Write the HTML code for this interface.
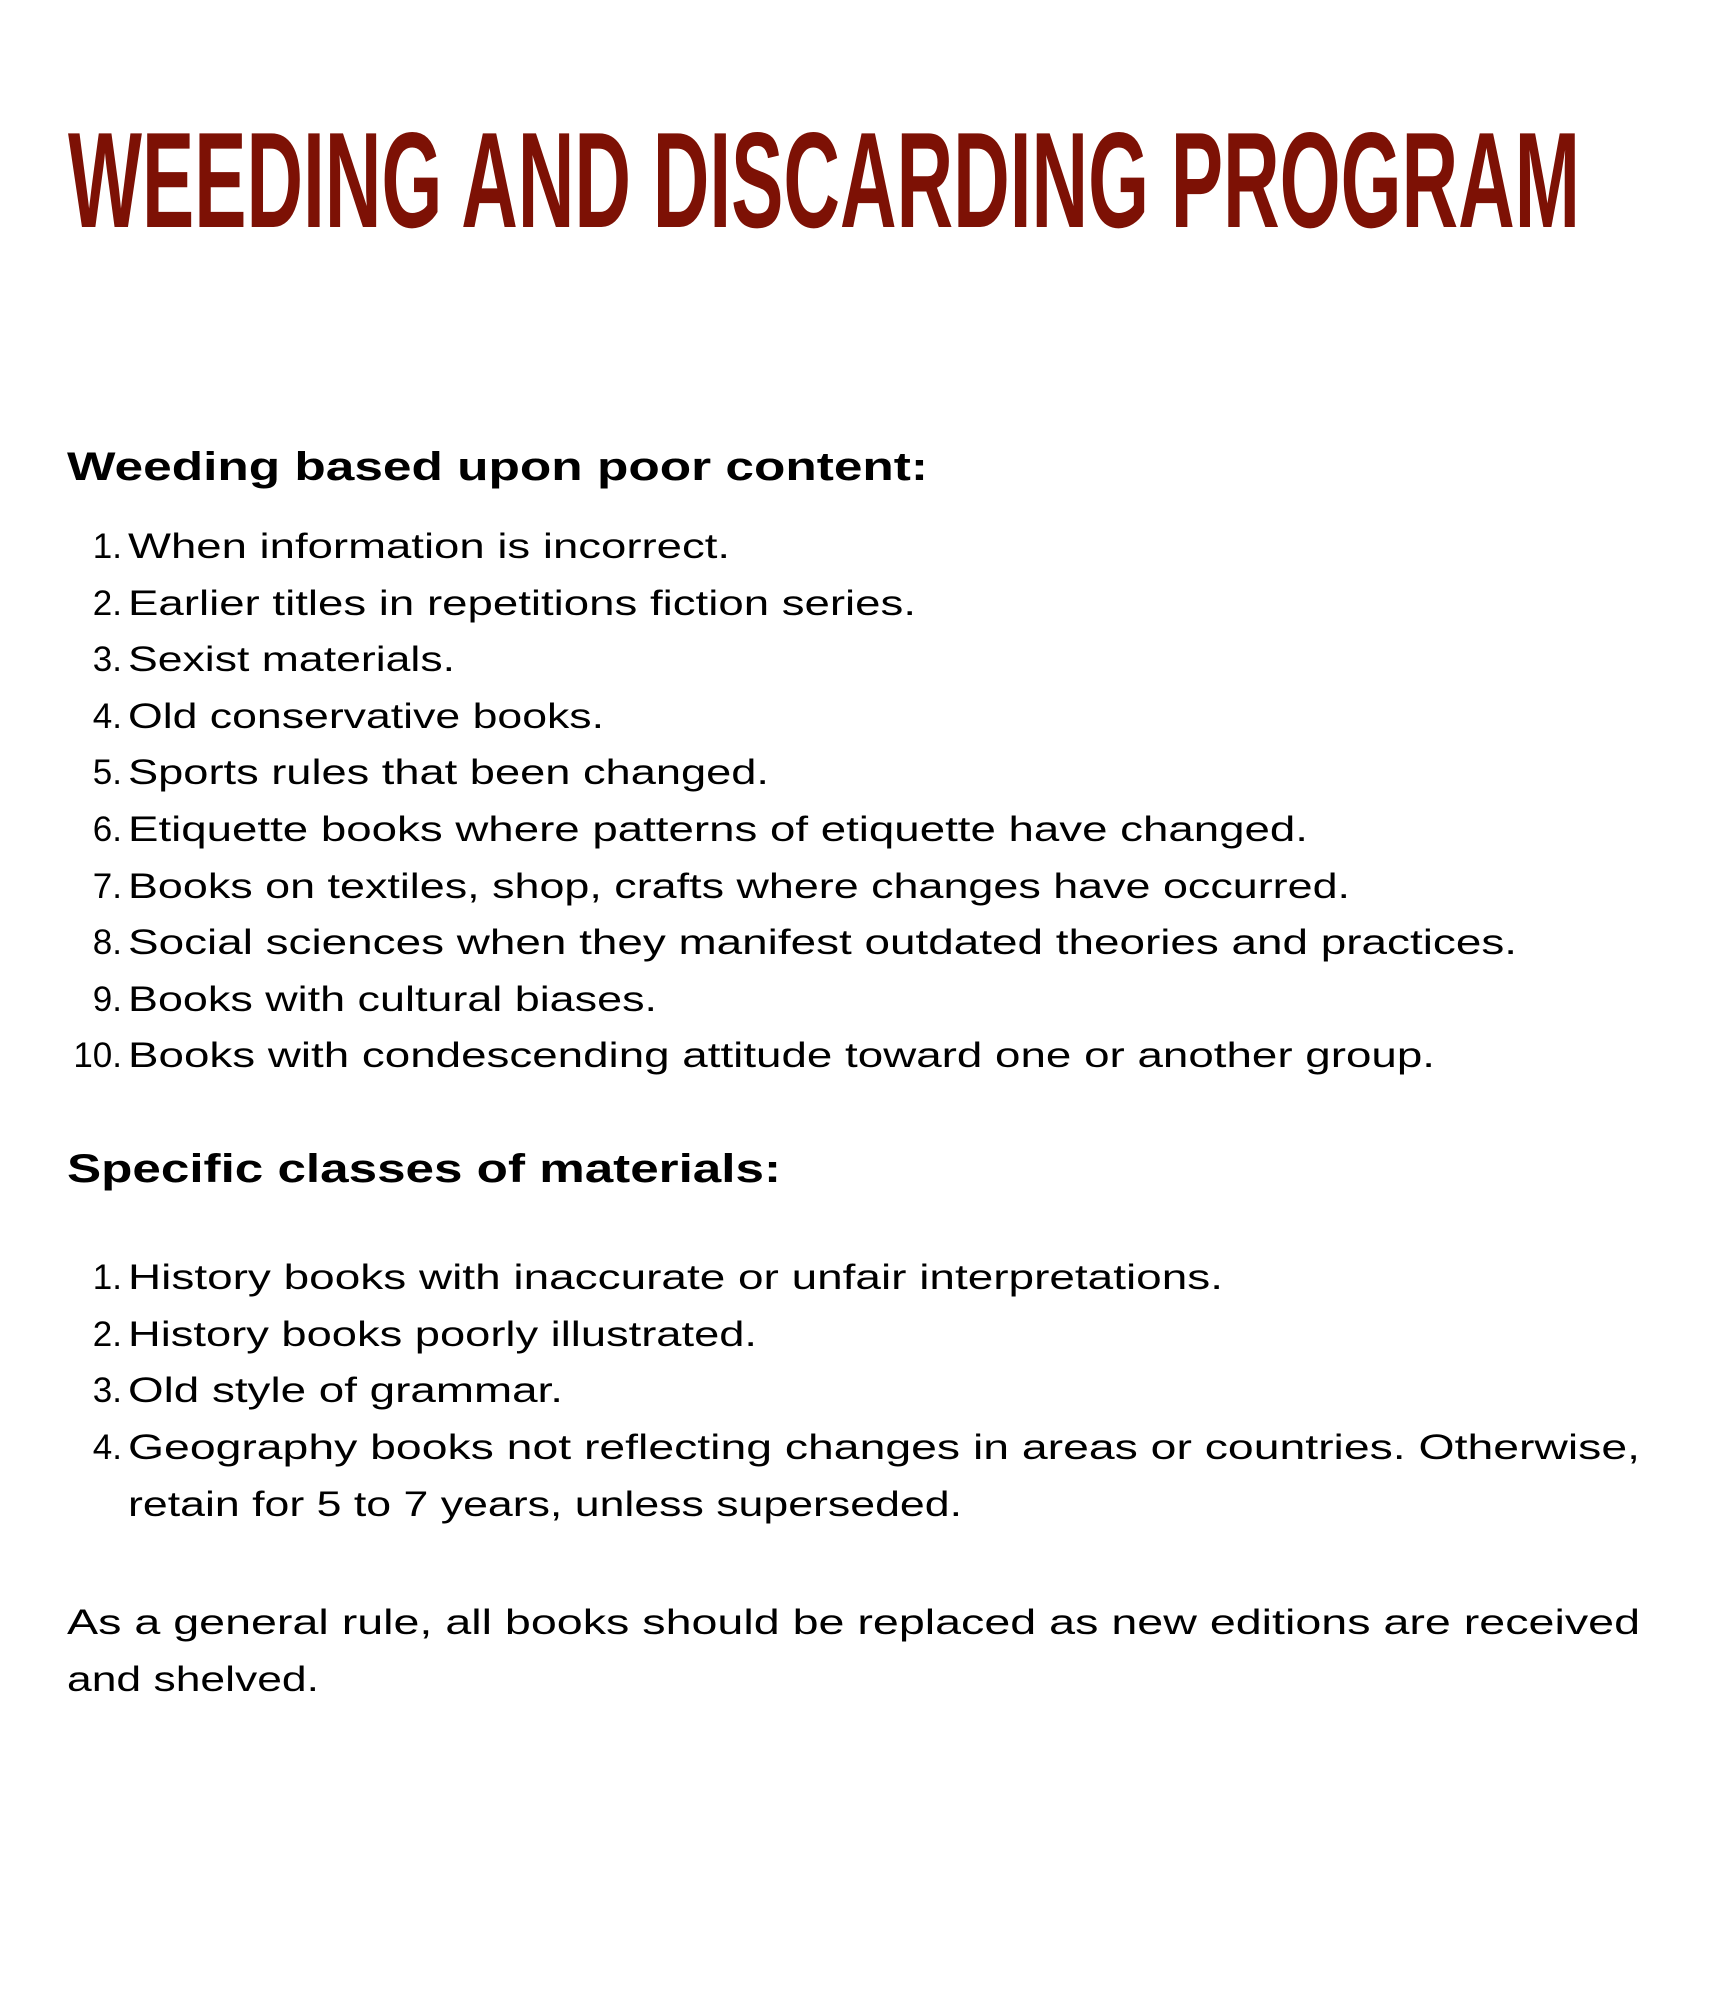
<!DOCTYPE html>
<html><head><meta charset="utf-8"><style>
html,body{margin:0;padding:0;background:#fff;}
svg{display:block;}
.t{font-family:"Liberation Sans Narrow","Liberation Sans",sans-serif;font-weight:bold;fill:#7d1105;font-size:136px;}
.h{font-family:"Liberation Sans",sans-serif;font-weight:bold;font-size:40px;fill:#000;}
.b{font-family:"Liberation Sans",sans-serif;font-size:35px;fill:#000;}
</style></head><body>
<svg width="1714" height="2000" viewBox="0 0 1714 2000" xmlns="http://www.w3.org/2000/svg">
<text class="t" x="68" y="227" textLength="1512" lengthAdjust="spacingAndGlyphs">WEEDING AND DISCARDING PROGRAM</text>
<text class="h" x="67" y="480" textLength="861" lengthAdjust="spacingAndGlyphs">Weeding based upon poor content:</text>
<g class="b" text-anchor="end">
<text x="122" y="558">1.</text><text x="122" y="615">2.</text><text x="122" y="671">3.</text><text x="122" y="728">4.</text><text x="122" y="784">5.</text><text x="122" y="841">6.</text><text x="122" y="898">7.</text><text x="122" y="954">8.</text><text x="122" y="1011">9.</text><text x="122" y="1067">10.</text>
<text x="122" y="1289">1.</text><text x="122" y="1346">2.</text><text x="122" y="1402">3.</text><text x="122" y="1459">4.</text>
</g>
<g class="b">
<text x="128" y="558" textLength="602" lengthAdjust="spacingAndGlyphs">When information is incorrect.</text>
<text x="128" y="615" textLength="788" lengthAdjust="spacingAndGlyphs">Earlier titles in repetitions fiction series.</text>
<text x="128" y="671" textLength="327" lengthAdjust="spacingAndGlyphs">Sexist materials.</text>
<text x="128" y="728" textLength="476" lengthAdjust="spacingAndGlyphs">Old conservative books.</text>
<text x="128" y="784" textLength="641" lengthAdjust="spacingAndGlyphs">Sports rules that been changed.</text>
<text x="128" y="841" textLength="1180" lengthAdjust="spacingAndGlyphs">Etiquette books where patterns of etiquette have changed.</text>
<text x="128" y="898" textLength="1222" lengthAdjust="spacingAndGlyphs">Books on textiles, shop, crafts where changes have occurred.</text>
<text x="128" y="954" textLength="1389" lengthAdjust="spacingAndGlyphs">Social sciences when they manifest outdated theories and practices.</text>
<text x="128" y="1011" textLength="529" lengthAdjust="spacingAndGlyphs">Books with cultural biases.</text>
<text x="128" y="1067" textLength="1307" lengthAdjust="spacingAndGlyphs">Books with condescending attitude toward one or another group.</text>
<text x="128" y="1289" textLength="1095" lengthAdjust="spacingAndGlyphs">History books with inaccurate or unfair interpretations.</text>
<text x="128" y="1346" textLength="629" lengthAdjust="spacingAndGlyphs">History books poorly illustrated.</text>
<text x="128" y="1402" textLength="435" lengthAdjust="spacingAndGlyphs">Old style of grammar.</text>
<text x="128" y="1459" textLength="1512" lengthAdjust="spacingAndGlyphs">Geography books not reflecting changes in areas or countries. Otherwise,</text>
<text x="128" y="1516" textLength="834" lengthAdjust="spacingAndGlyphs">retain for 5 to 7 years, unless superseded.</text>
<text x="67" y="1634" textLength="1573" lengthAdjust="spacingAndGlyphs">As a general rule, all books should be replaced as new editions are received</text>
<text x="67" y="1691" textLength="252" lengthAdjust="spacingAndGlyphs">and shelved.</text>
</g>
<text class="h" x="67" y="1182" textLength="714" lengthAdjust="spacingAndGlyphs">Specific classes of materials:</text>
</svg>
</body></html>
